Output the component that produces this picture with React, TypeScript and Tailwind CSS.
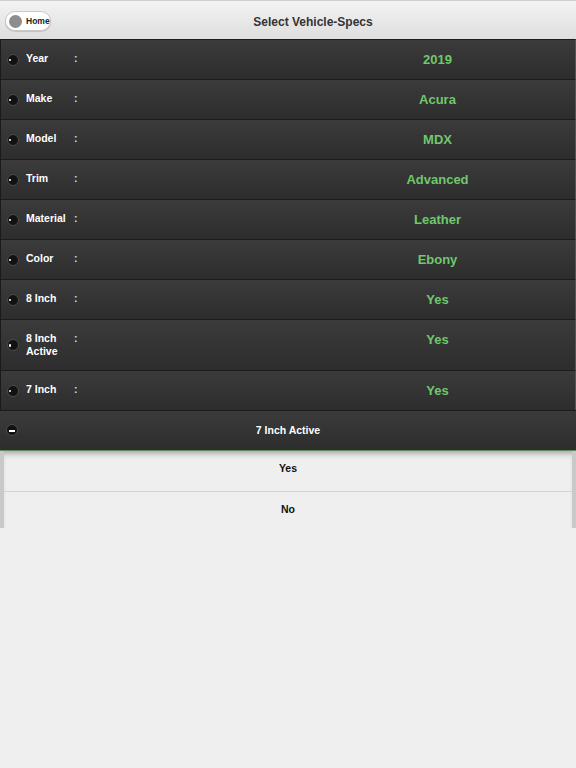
const rows = [
  { label: 'Year', value: '2019' },
  { label: 'Make', value: 'Acura' },
  { label: 'Model', value: 'MDX' },
  { label: 'Trim', value: 'Advanced' },
  { label: 'Material', value: 'Leather' },
  { label: 'Color', value: 'Ebony' },
  { label: '8 Inch', value: 'Yes' },
  { label: '8 Inch Active', value: 'Yes', tall: true },
  { label: '7 Inch', value: 'Yes' },
]

function Knob({ minus }: { minus?: boolean }) {
  return (
    <span className="block relative w-[12px] h-[12px] rounded-full bg-[#121212] border border-[#4c4c4c] shrink-0">
      {minus ? (
        <span className="absolute left-[2px] top-[4.5px] w-[6px] h-[2px] bg-white" />
      ) : (
        <span className="absolute left-[1px] top-[4px] w-[2.5px] h-[2.5px] rounded-full bg-white" />
      )}
    </span>
  )
}

export default function App() {
  return (
    <div className="w-[576px] h-[768px] bg-[#efefef] font-['Liberation_Sans',Arial,sans-serif]">
      <div className="h-[39px] flex items-center border-t border-[#cfcfcf] bg-gradient-to-b from-[#f3f3f3] to-[#dedede] relative">
        <button className="absolute left-[5px] top-[10px] h-[20px] w-[46px] flex items-center gap-[4px] pl-[3px] rounded-full bg-white border border-[#c8c8c8] shadow-[0_1px_1px_rgba(0,0,0,0.15)]">
          <span className="w-[13px] h-[13px] rounded-full bg-[#8d8d8d]" />
          <span className="text-[8.5px] font-bold text-[#222]">Home</span>
        </button>
        <div className="flex-1 text-center pl-[50px] pt-[3px] text-[12px] font-bold text-[#333]">Select Vehicle-Specs</div>
      </div>

      {rows.map((r) => (
        <div
          key={r.label}
          className={`flex border-t border-[#1c1c1c] border-l border-l-[#1a1a1a] border-r border-r-[#555] bg-gradient-to-b from-[#3b3b3b] to-[#2d2d2d] ${r.tall ? 'h-[51px]' : 'h-[40px]'}`}
        >
          <div className="w-[25px] flex justify-center items-center pr-[2px]">
            <Knob />
          </div>
          <div className="w-[48px] pt-[12px] text-[10.5px] leading-[13px] font-bold text-white">{r.label}</div>
          <div className="w-[10px] pt-[12px] text-[10.5px] leading-[13px] font-bold text-[#ddd]">:</div>
          <div className="w-[216px]" />
          <div className="flex-1 pt-[12px] text-center text-[13px] leading-[16px] font-bold text-[#6fc86b]">{r.value}</div>
        </div>
      ))}

      <div className="h-[41px] flex items-center border-t border-[#1c1c1c] border-b border-b-[#5f8a5c] bg-gradient-to-b from-[#3b3b3b] to-[#2d2d2d] relative">
        <div className="absolute left-[6px] top-[13px]">
          <Knob minus />
        </div>
        <div className="flex-1 text-center text-[10.5px] font-bold text-white">7 Inch Active</div>
      </div>

      <div className="h-[77px] bg-[#efefef] border-l-[4px] border-l-[#c9c9c9] border-r-[4px] border-r-[#c9c9c9] shadow-[inset_0_6px_6px_-4px_rgba(0,0,0,0.35)] flex flex-col">
        <div className="h-[41px] pb-[5px] flex items-center justify-center border-b border-[#d2d2d2] text-[10.5px] font-bold text-[#111]">Yes</div>
        <div className="flex-1 flex items-center justify-center text-[10.5px] font-bold text-[#111]">No</div>
      </div>
    </div>
  )
}
